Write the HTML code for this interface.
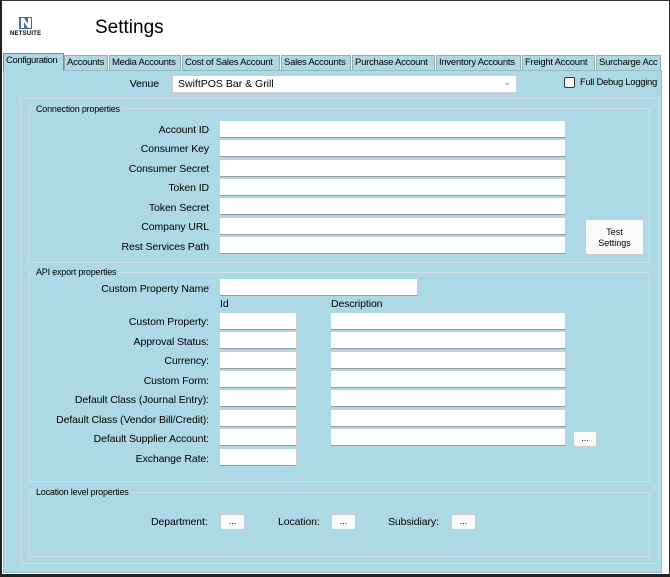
<!DOCTYPE html>
<html><head><style>
*{box-sizing:border-box;margin:0;padding:0}
body{width:670px;height:577px;background:#fff;font-family:"Liberation Sans",Arial,sans-serif;font-size:11px;color:#000;position:relative;overflow:hidden}
.a{position:absolute}
.win{left:0;top:0;width:670px;height:577px;border:1px solid #333;border-left:2px solid #222;border-bottom:3px solid #222}
.tab{position:absolute;top:55px;height:15px;background:#add8e6;border:1px solid #9aa;border-bottom:none;font-size:9.5px;letter-spacing:-0.25px;line-height:13px;padding-left:2px;white-space:nowrap;overflow:hidden}
.panel{left:3px;top:70px;width:659px;height:503px;background:#add8e6;border:1px solid #9bb}
.grp{position:absolute;border:1px solid #d0dde2}
.gl{position:absolute;font-size:9px;background:#add8e6;padding:0 2px;letter-spacing:-0.2px}
.lb{position:absolute;text-align:right;font-size:10.5px;letter-spacing:-0.1px;width:200px;line-height:14px}
.tb{position:absolute;background:#fff;border-bottom:1px solid #999;border-right:1px solid #ccc;height:17px}
.btn{position:absolute;background:#fafafa;border:1px solid #ccc;border-radius:2px;font-size:9px;text-align:center}
.sl{position:absolute;font-size:10.5px;letter-spacing:-0.1px}
</style></head><body>
<div class="a win"></div>
<svg class="a" style="left:18px;top:16px" width="16" height="14" viewBox="0 0 16 14"><rect x="1" y="1" width="13" height="12" fill="#4a6f9a"/><path d="M3 12V2h3l4 6V2h3v10h-3L6 6v6z" fill="#fff"/></svg>
<div class="a" style="left:10px;top:31px;font-size:6px;font-weight:bold;letter-spacing:0.2px">NETSUITE</div>
<div class="a" style="left:95px;top:17px;font-size:19px">Settings</div>
<div class="a panel"></div>
<div class="tab" style="left:3px;top:53px;width:61px;height:18px;border-color:#888;letter-spacing:-0.4px">Configuration</div>
<div class="tab" style="left:64px;width:44px">Accounts</div>
<div class="tab" style="left:109px;width:72px">Media Accounts</div>
<div class="tab" style="left:182px;width:98px">Cost of Sales Account</div>
<div class="tab" style="left:281px;width:70px">Sales Accounts</div>
<div class="tab" style="left:352px;width:83px">Purchase Account</div>
<div class="tab" style="left:436px;width:85px">Inventory Accounts</div>
<div class="tab" style="left:522px;width:73px">Freight Account</div>
<div class="tab" style="left:596px;width:65px">Surcharge Acc</div>
<div class="lb" style="left:-41px;top:77px">Venue</div>
<div class="tb" style="left:172px;top:75px;width:345px;height:18px;border:1px solid #ccc;padding:2px 5px;font-size:10.5px">SwiftPOS Bar &amp; Grill<span class="a" style="right:5px;top:1px;color:#888;font-size:9px">&#8964;</span></div>
<div class="a" style="left:564px;top:77px;width:11px;height:11px;border:1px solid #333;border-radius:2px;background:#fff"></div>
<div class="a" style="left:580px;top:77px;font-size:9.5px;letter-spacing:-0.3px">Full Debug Logging</div>
<div class="grp" style="left:20px;top:98px;width:640px;height:466px"></div>
<div class="grp" style="left:28px;top:108px;width:622px;height:155px"></div>
<div class="gl" style="left:34px;top:104px">Connection properties</div>
<div class="lb" style="left:9px;top:123px">Account ID</div><div class="tb" style="left:220px;top:121px;width:346px"></div>
<div class="lb" style="left:9px;top:142px">Consumer Key</div><div class="tb" style="left:220px;top:140px;width:346px"></div>
<div class="lb" style="left:9px;top:162px">Consumer Secret</div><div class="tb" style="left:220px;top:160px;width:346px"></div>
<div class="lb" style="left:9px;top:181px">Token ID</div><div class="tb" style="left:220px;top:179px;width:346px"></div>
<div class="lb" style="left:9px;top:201px">Token Secret</div><div class="tb" style="left:220px;top:198px;width:346px"></div>
<div class="lb" style="left:9px;top:220px">Company URL</div><div class="tb" style="left:220px;top:218px;width:346px"></div>
<div class="lb" style="left:9px;top:240px">Rest Services Path</div><div class="tb" style="left:220px;top:237px;width:346px"></div>
<div class="btn" style="left:585px;top:219px;width:59px;height:36px;padding-top:7px;line-height:11px">Test<br>Settings</div>
<div class="grp" style="left:28px;top:272px;width:622px;height:210px"></div>
<div class="gl" style="left:34px;top:267px">API export properties</div>
<div class="lb" style="left:9px;top:282px">Custom Property Name</div><div class="tb" style="left:220px;top:279px;width:198px"></div>
<div class="sl" style="left:220px;top:298px">Id</div><div class="sl" style="left:331px;top:298px">Description</div>
<div class="lb" style="left:9px;top:315px">Custom Property:</div><div class="tb" style="left:220px;top:313px;width:77px"></div><div class="tb" style="left:331px;top:313px;width:235px"></div>
<div class="lb" style="left:9px;top:335px">Approval Status:</div><div class="tb" style="left:220px;top:332px;width:77px"></div><div class="tb" style="left:331px;top:332px;width:235px"></div>
<div class="lb" style="left:9px;top:354px">Currency:</div><div class="tb" style="left:220px;top:352px;width:77px"></div><div class="tb" style="left:331px;top:352px;width:235px"></div>
<div class="lb" style="left:9px;top:374px">Custom Form:</div><div class="tb" style="left:220px;top:371px;width:77px"></div><div class="tb" style="left:331px;top:371px;width:235px"></div>
<div class="lb" style="left:9px;top:393px">Default Class (Journal Entry):</div><div class="tb" style="left:220px;top:390px;width:77px"></div><div class="tb" style="left:331px;top:390px;width:235px"></div>
<div class="lb" style="left:9px;top:413px">Default Class (Vendor Bill/Credit):</div><div class="tb" style="left:220px;top:410px;width:77px"></div><div class="tb" style="left:331px;top:410px;width:235px"></div>
<div class="lb" style="left:9px;top:432px">Default Supplier Account:</div><div class="tb" style="left:220px;top:429px;width:77px"></div><div class="tb" style="left:331px;top:429px;width:235px"></div>
<div class="btn" style="left:573px;top:431px;width:24px;height:16px;line-height:12px">...</div>
<div class="lb" style="left:9px;top:452px">Exchange Rate:</div><div class="tb" style="left:220px;top:449px;width:77px"></div>
<div class="grp" style="left:28px;top:492px;width:622px;height:65px"></div>
<div class="gl" style="left:34px;top:487px">Location level properties</div>
<div class="sl" style="left:151px;top:516px">Department:</div><div class="btn" style="left:220px;top:514px;width:25px;height:16px;line-height:12px">...</div>
<div class="sl" style="left:278px;top:516px">Location:</div><div class="btn" style="left:331px;top:514px;width:25px;height:16px;line-height:12px">...</div>
<div class="sl" style="left:388px;top:516px">Subsidiary:</div><div class="btn" style="left:451px;top:514px;width:25px;height:16px;line-height:12px">...</div>
</body></html>
